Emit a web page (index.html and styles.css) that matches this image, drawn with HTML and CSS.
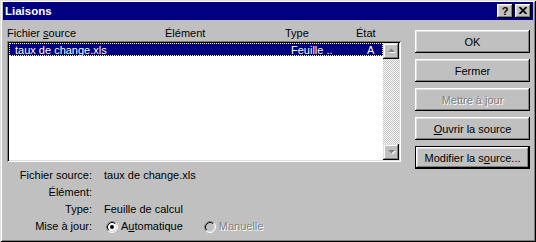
FILE: index.html
```html
<!DOCTYPE html>
<html lang="fr">
<head>
<meta charset="utf-8">
<title>Liaisons</title>
<link rel="stylesheet" href="styles.css">
</head>
<body>
<div class="window">
  <div class="titlebar">
    <span class="title">Liaisons</span>
    <div class="tbtns">
      <span class="tbtn help">?</span>
      <span class="tbtn close">
        <svg width="8" height="7" viewBox="0 0 8 7"><path d="M0.5 0 L7.5 7 M7.5 0 L0.5 7" stroke="#000" stroke-width="1.7" fill="none"/></svg>
      </span>
    </div>
  </div>
  <div class="body">
    <div class="left">
      <div class="headers">
        <span>Fichier <span class="ak">s</span>ource</span>
        <span>Élément</span>
        <span>Type</span>
        <span>État</span>
      </div>
      <div class="listbox">
        <div class="items">
          <div class="row selected">
            <span>taux de change.xls</span>
            <span>Feuille ..</span>
            <span>A</span>
          </div>
        </div>
        <div class="scrollbar">
          <div class="sbtn">
            <svg width="9" height="6" viewBox="0 0 9 6"><path d="M2 5 L9 5 L5.5 1.5 Z" fill="#fff"/><path d="M1 4 L8 4 L4.5 0.5 Z" fill="#808080"/></svg>
          </div>
          <div class="track"></div>
          <div class="sbtn">
            <svg width="9" height="6" viewBox="0 0 9 6"><path d="M2 2 L9 2 L5.5 5.5 Z" fill="#fff"/><path d="M1 1 L8 1 L4.5 4.5 Z" fill="#808080"/></svg>
          </div>
        </div>
      </div>
      <div class="info">
        <span class="lbl">Fichier source:</span>
        <span>taux de change.xls</span>
        <span class="lbl">Élément:</span>
        <span></span>
        <span class="lbl">Type:</span>
        <span>Feuille de calcul</span>
        <span class="lbl">Mise à jour:</span>
        <div class="opts">
          <label class="opt">
            <svg width="12" height="12" viewBox="0 0 12 12">
              <circle cx="6" cy="6" r="4" fill="#fff"/>
              <path d="M2.11 9.89 A5.5 5.5 0 0 1 9.89 2.11" stroke="#808080" fill="none"/>
              <path d="M9.89 2.11 A5.5 5.5 0 0 1 2.11 9.89" stroke="#fff" fill="none"/>
              <path d="M2.82 9.18 A4.5 4.5 0 0 1 9.18 2.82" stroke="#000" fill="none"/>
              <path d="M9.18 2.82 A4.5 4.5 0 0 1 2.82 9.18" stroke="#dfdfdf" fill="none"/>
              <circle cx="6" cy="6" r="2" fill="#000"/>
            </svg>
            <span>A<span class="ak">u</span>tomatique</span>
          </label>
          <label class="opt disabled">
            <svg width="12" height="12" viewBox="0 0 12 12">
              <circle cx="6" cy="6" r="4" fill="#c0c0c0"/>
              <path d="M2.11 9.89 A5.5 5.5 0 0 1 9.89 2.11" stroke="#808080" fill="none"/>
              <path d="M9.89 2.11 A5.5 5.5 0 0 1 2.11 9.89" stroke="#fff" fill="none"/>
              <path d="M2.82 9.18 A4.5 4.5 0 0 1 9.18 2.82" stroke="#000" fill="none"/>
              <path d="M9.18 2.82 A4.5 4.5 0 0 1 2.82 9.18" stroke="#dfdfdf" fill="none"/>
            </svg>
            <span>Manuelle</span>
          </label>
        </div>
      </div>
    </div>
    <div class="buttons">
      <div class="btn">OK</div>
      <div class="btn">Fermer</div>
      <div class="btn disabled">Mettre à jour</div>
      <div class="btn"><span><span class="ak">O</span>uvrir la source</span></div>
      <div class="btn default"><span>Modifier la s<span class="ak">o</span>urce...</span></div>
    </div>
  </div>
</div>
</body>
</html>
```

FILE: styles.css
```css
* { box-sizing: border-box; }
html, body { margin: 0; padding: 0; }
body {
  font-family: "Liberation Sans", Arial, sans-serif;
  font-size: 11px;
  color: #000;
  background: #c0c0c0;
}
.window {
  width: 536px;
  height: 242px;
  background: #c0c0c0;
  padding: 2px 3px 3px 3px;
  box-shadow: inset 1px 1px #dfdfdf, inset -1px -1px #000, inset 2px 2px #fff, inset -2px -2px #808080;
  display: flex;
  flex-direction: column;
}
.titlebar {
  height: 18px;
  background: #000080;
  display: flex;
  align-items: center;
  justify-content: space-between;
  padding: 0 2px 0 2px;
}
.title {
  color: #fff;
  font-weight: bold;
  font-size: 11.5px;
  line-height: 13px;
}
.tbtns {
  display: flex;
  gap: 2px;
}
.tbtn {
  width: 16px;
  height: 14px;
  background: #c0c0c0;
  box-shadow: inset -1px -1px #000, inset 1px 1px #fff, inset -2px -2px #808080, inset 2px 2px #dfdfdf;
  display: flex;
  align-items: center;
  justify-content: center;
}
.tbtn.help {
  font-weight: bold;
  font-size: 11px;
  line-height: 14px;
  padding-bottom: 1px;
}
.tbtn.close svg { margin-bottom: 1px; }
.ak { text-decoration: underline; }

.body {
  flex: 1;
  display: flex;
  padding: 7px 3px 0 4px;
}
.left {
  width: 394px;
  display: flex;
  flex-direction: column;
}
.headers {
  display: grid;
  grid-template-columns: 158px 120px 71px auto;
  height: 13px;
  line-height: 13px;
  white-space: nowrap;
}
.listbox {
  margin-top: 1px;
  height: 121px;
  padding: 2px;
  background: #fff;
  box-shadow: inset 1px 1px #808080, inset -1px -1px #fff, inset 2px 2px #000, inset -2px -2px #dfdfdf;
  display: flex;
}
.items { flex: 1; }
.row {
  height: 13px;
  line-height: 14px;
  display: grid;
  grid-template-columns: 276px 76px auto;
  padding-left: 6px;
  white-space: nowrap;
}
.row.selected {
  background: #000080;
  color: #fff;
  outline: 1px dotted #ffffc0;
  outline-offset: -1px;
}
.scrollbar {
  width: 16px;
  display: flex;
  flex-direction: column;
}
.sbtn {
  width: 16px;
  height: 16px;
  background: #c0c0c0;
  box-shadow: inset -1px -1px #000, inset 1px 1px #dfdfdf, inset -2px -2px #808080, inset 2px 2px #fff;
  display: flex;
  align-items: center;
  justify-content: center;
}
.track {
  flex: 1;
  background: repeating-conic-gradient(#fff 0 25%, #c0c0c0 0 50%) 0 0 / 2px 2px;
}
.info {
  margin-top: 5px;
  display: grid;
  grid-template-columns: 85px auto;
  column-gap: 12px;
  line-height: 17px;
  white-space: nowrap;
}
.info .lbl { text-align: right; }
.opts {
  display: flex;
  align-items: center;
  gap: 21px;
  padding-left: 2px;
}
.opt {
  display: flex;
  align-items: center;
  gap: 3px;
}
.opt svg { display: block; }
.disabled {
  color: #808080;
  text-shadow: 1px 1px 0 #fff;
}

.buttons {
  width: 115px;
  margin-left: auto;
  margin-top: 3px;
  display: flex;
  flex-direction: column;
  gap: 6px;
}
.btn {
  height: 23px;
  background: #c0c0c0;
  box-shadow: inset -1px -1px #000, inset 1px 1px #fff, inset -2px -2px #808080, inset 2px 2px #dfdfdf;
  display: flex;
  align-items: center;
  justify-content: center;
  white-space: nowrap;
}
.btn.default {
  box-shadow: inset 0 0 0 1px #000, inset -2px -2px #000, inset 2px 2px #fff, inset -3px -3px #808080, inset 3px 3px #dfdfdf;
}
```
